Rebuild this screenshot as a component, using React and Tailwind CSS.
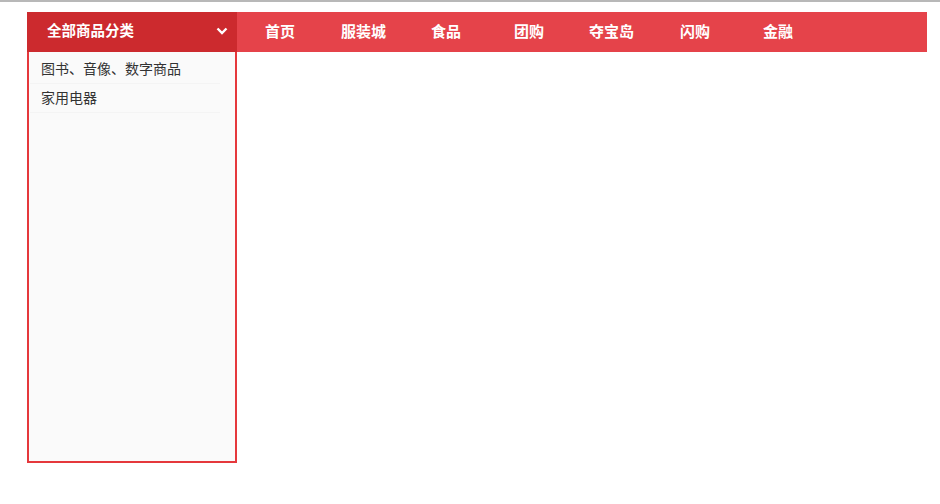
import React from 'react';

const navItems = [
  { label: '首页', cls: 'ml-[28px]' },
  { label: '服装城', cls: 'ml-[46px]' },
  { label: '食品', cls: 'ml-[45px]' },
  { label: '团购', cls: 'ml-[53px]' },
  { label: '夺宝岛', cls: 'ml-[45px]' },
  { label: '闪购', cls: 'ml-[46px]' },
  { label: '金融', cls: 'ml-[53px]' },
];

const categories = ['图书、音像、数字商品', '家用电器'];

function Chevron() {
  return (
    <svg width="12" height="8" viewBox="0 0 12 8" className="block">
      <path d="M1.5 1.5 L6 6 L10.5 1.5" fill="none" stroke="#fff" strokeWidth="2.4" />
    </svg>
  );
}

export default function App() {
  return (
    <div
      className="w-[940px] h-[504px] bg-white border-t-2 border-[#b8b8b8] overflow-hidden"
      style={{ fontFamily: '"Noto Sans CJK SC", "Noto Sans", sans-serif' }}
    >
      <div className="ml-[27px] mt-[10px] w-[900px]">
        {/* top nav bar */}
        <div className="flex h-[40px] bg-[#e5434a] items-center">
          <div className="flex items-center justify-between w-[210px] h-full bg-[#cc2a2e] pl-[20px] pr-[9px] pb-[2px]">
            <span className="text-white text-[14.5px] font-bold leading-none mb-[2px]">全部商品分类</span>
            <Chevron />
          </div>
          <ul className="flex items-center pb-[4px]">
            {navItems.map((item) => (
              <li key={item.label} className={`${item.cls} text-white text-[15px] font-bold leading-none`}>
                {item.label}
              </li>
            ))}
          </ul>
        </div>

        {/* category sidebar */}
        <div className="w-[210px] h-[411px] bg-[#fafafa] border-2 border-t-0 border-[#e5383c] pt-[3px] pl-px">
          {categories.map((c) => (
            <div
              key={c}
              className="w-[190px] h-[29px] flex items-center pl-[11px] pb-[2px] border-b border-[#f4f4f4] text-[14px] text-[#333]"
            >
              {c}
            </div>
          ))}
        </div>
      </div>
    </div>
  );
}
